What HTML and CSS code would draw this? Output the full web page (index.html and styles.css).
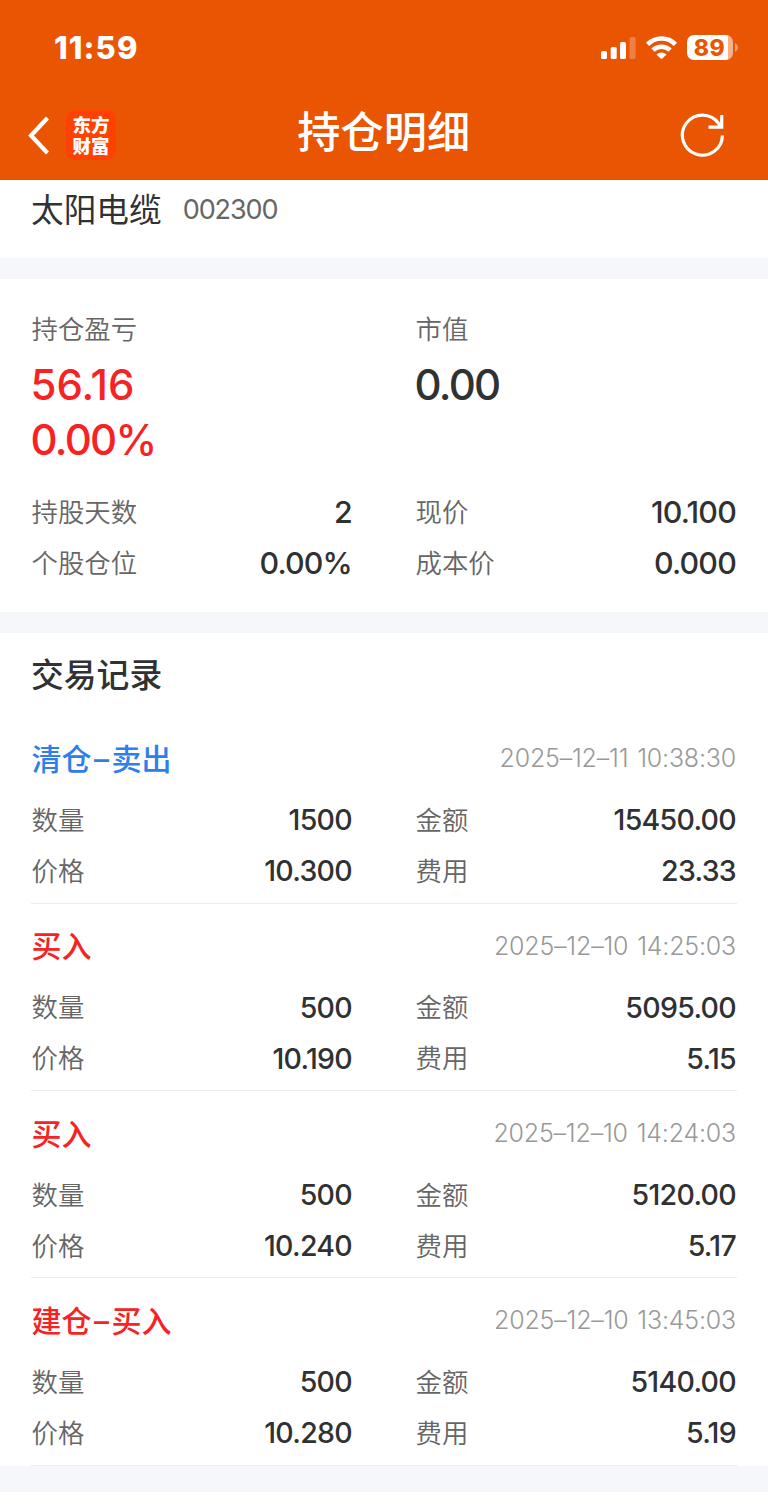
FILE: index.html
```html
<!DOCTYPE html>
<html lang="zh-CN">
<head>
    <meta charset="UTF-8">
    <meta name="viewport" content="width=device-width, initial-scale=1.0">
    <title>持仓明细</title>
    <link rel="stylesheet" href="styles.css">
</head>
<body>
    <header class="header">
        <div class="status-bar">
            <span class="clock">11:59</span>
            <div class="status-icons">
                <svg class="signal" width="36" height="24" viewBox="0 0 36 24" fill="#fff">
                    <rect x="1" y="15" width="6" height="8" rx="1.6"/>
                    <rect x="10.7" y="11" width="6" height="12" rx="1.6"/>
                    <rect x="20" y="6" width="6" height="17" rx="1.6"/>
                    <rect x="29.6" y="1" width="6" height="22" rx="1.6" opacity="0.25"/>
                </svg>
                <svg class="wifi" width="32" height="24" viewBox="0 0 32 24" fill="none" stroke="#fff" stroke-width="4.6">
                    <path d="M2.6 8.3 A19.5 19.5 0 0 1 30.4 8.3"/>
                    <path d="M7.9 14.2 A12.3 12.3 0 0 1 25.1 14.2"/>
                    <path d="M11.4 18.4 Q16.5 14.6 21.6 18.4 L16.5 23.2 Z" fill="#fff" stroke="none"/>
                </svg>
                <div class="battery"><span class="battery-level">89</span></div>
                <svg class="battery-tip" width="3" height="9" viewBox="0 0 3 9"><path d="M0 0 Q2.8 1.5 2.8 4.5 Q2.8 7.5 0 9 Z" fill="#fff" opacity="0.5"/></svg>
            </div>
        </div>
        <div class="nav">
            <div class="nav-left">
                <svg width="24" height="40" viewBox="0 0 24 40" fill="none" stroke="#fff" stroke-width="4.2">
                    <path d="M21.5 3 L5 20.5 L21.5 38"/>
                </svg>
                <div class="logo"><span>东方</span><span>财富</span></div>
            </div>
            <h1 class="title">持仓明细</h1>
            <svg class="refresh" width="46" height="46" viewBox="0 0 46 46" fill="none" stroke="#fff" stroke-width="3.2">
                <path d="M44.4 23.4 A20 20 0 1 1 40.8 11.7 L42.5 14.5"/>
                <path d="M43.7 3 V15.2 H30.5"/>
            </svg>
        </div>
    </header>

    <section class="stock">
        <span class="stock-name">太阳电缆</span>
        <span class="stock-code">002300</span>
    </section>

    <section class="summary">
        <div class="overview">
            <div>
                <div class="label">持仓盈亏</div>
                <div class="big profit red">56.16</div>
                <div class="big red">0.00%</div>
            </div>
            <div>
                <div class="label">市值</div>
                <div class="big">0.00</div>
            </div>
        </div>
        <div class="grid">
            <div class="cell"><span class="label">持股天数</span><span class="value">2</span></div>
            <div class="cell"><span class="label">现价</span><span class="value">10.100</span></div>
            <div class="cell"><span class="label">个股仓位</span><span class="value">0.00%</span></div>
            <div class="cell"><span class="label">成本价</span><span class="value">0.000</span></div>
        </div>
    </section>

    <section class="records">
        <h2 class="records-title">交易记录</h2>

        <div class="record">
            <div class="record-head"><span class="type blue">清仓<span class="dash">–</span>卖出</span><span class="time">2025–12–11 10:38:30</span></div>
            <div class="grid">
                <div class="cell"><span class="label">数量</span><span class="value">1500</span></div>
                <div class="cell"><span class="label">金额</span><span class="value">15450.00</span></div>
                <div class="cell"><span class="label">价格</span><span class="value">10.300</span></div>
                <div class="cell"><span class="label">费用</span><span class="value">23.33</span></div>
            </div>
        </div>

        <div class="record">
            <div class="record-head"><span class="type red">买入</span><span class="time">2025–12–10 14:25:03</span></div>
            <div class="grid">
                <div class="cell"><span class="label">数量</span><span class="value">500</span></div>
                <div class="cell"><span class="label">金额</span><span class="value">5095.00</span></div>
                <div class="cell"><span class="label">价格</span><span class="value">10.190</span></div>
                <div class="cell"><span class="label">费用</span><span class="value">5.15</span></div>
            </div>
        </div>

        <div class="record">
            <div class="record-head"><span class="type red">买入</span><span class="time">2025–12–10 14:24:03</span></div>
            <div class="grid">
                <div class="cell"><span class="label">数量</span><span class="value">500</span></div>
                <div class="cell"><span class="label">金额</span><span class="value">5120.00</span></div>
                <div class="cell"><span class="label">价格</span><span class="value">10.240</span></div>
                <div class="cell"><span class="label">费用</span><span class="value">5.17</span></div>
            </div>
        </div>

        <div class="record">
            <div class="record-head"><span class="type red">建仓<span class="dash">–</span>买入</span><span class="time">2025–12–10 13:45:03</span></div>
            <div class="grid">
                <div class="cell"><span class="label">数量</span><span class="value">500</span></div>
                <div class="cell"><span class="label">金额</span><span class="value">5140.00</span></div>
                <div class="cell"><span class="label">价格</span><span class="value">10.280</span></div>
                <div class="cell"><span class="label">费用</span><span class="value">5.19</span></div>
            </div>
        </div>
    </section>
    <div class="footer-gap"></div>
</body>
</html>
```
FILE: styles.css
```css
* {
    box-sizing: border-box;
}
body {
    margin: 0;
    font-family: Inter, "Noto Sans CJK SC", sans-serif;
    background: #fff;
    color: #303133;
}
.header {
    height: 180px;
    background: #ea5504;
    color: #fff;
}
.status-bar {
    display: flex;
    justify-content: space-between;
    align-items: center;
    height: 92px;
    padding: 3px 30px 0 54px;
}
.clock {
    font-size: 31px;
    font-weight: 800;
    letter-spacing: 1.1px;
}
.status-icons {
    display: flex;
    align-items: center;
}
.wifi {
    margin: 0 10px 0 9px;
}
.battery {
    width: 46px;
    height: 25px;
    border-radius: 7px;
    background: linear-gradient(to right, #fff 41px, #f6b18b 41px);
}
.battery-level {
    display: block;
    width: 45px;
    line-height: 26px;
    font-size: 23px;
    font-weight: 800;
    text-align: center;
    letter-spacing: 0.5px;
    color: #ea5504;
}
.battery-tip {
    margin-left: 2px;
}
.nav {
    display: grid;
    grid-template-columns: 1fr auto 1fr;
    align-items: center;
    height: 86px;
    padding: 0 44.5px 0 26px;
}
.nav-left {
    display: flex;
    align-items: center;
    gap: 16px;
}
.logo {
    display: flex;
    flex-direction: column;
    justify-content: center;
    align-items: center;
    width: 50px;
    height: 50px;
    padding-top: 2px;
    border-radius: 9px;
    background: #ff4203;
    font-size: 18.5px;
    font-weight: 900;
    line-height: 21px;
}
.title {
    margin: 0 0 6px 18px;
    font-size: 43.2px;
    font-weight: 500;
    line-height: 60px;
}
.refresh {
    justify-self: end;
}
.stock {
    display: flex;
    align-items: center;
    gap: 21px;
    height: 78px;
    padding: 0 31px 20px;
}
.stock-name {
    margin-top: -3px;
    font-size: 32.7px;
}
.stock-code {
    font-size: 27px;
    letter-spacing: -1.1px;
    color: #666;
}
.summary {
    height: 375px;
    padding: 29px 32px 0;
    border-top: 21px solid #f6f7fa;
    border-bottom: 21px solid #f6f7fa;
}
.overview,
.grid {
    display: grid;
    grid-template-columns: 1fr 1fr;
    column-gap: 64px;
}
.label {
    margin-left: -0.5px;
    font-size: 26.4px;
    font-weight: 350;
    line-height: 42px;
    color: #666;
}
.big {
    margin: 7px 0 0 -1.5px;
    font-size: 42px;
    font-weight: 550;
    line-height: 55px;
    letter-spacing: -1.7px;
}
.big + .big {
    margin-top: 0;
}
.profit {
    letter-spacing: 0;
}
.overview {
    margin-bottom: 19px;
}
.cell {
    display: flex;
    justify-content: space-between;
    align-items: center;
    height: 51px;
}
.value {
    font-size: 28.5px;
    font-weight: 500;
    letter-spacing: -0.7px;
}
.summary .value {
    font-size: 30.4px;
    letter-spacing: -0.8px;
}
.red {
    color: #f72224;
}
.blue {
    color: #2e80e8;
}
.records {
    padding: 0 31px;
}
.records-title {
    margin: 0;
    height: 83.3px;
    font-size: 32.8px;
    font-weight: 500;
    line-height: 84px;
}
.record {
    height: 187.4px;
    padding: 16px 1px 0;
    border-bottom: 1px solid #ececee;
}
.record-head {
    display: flex;
    justify-content: space-between;
    align-items: center;
    height: 52px;
    margin-bottom: 10px;
}
.type {
    margin: -3px 0 0 -0.5px;
    font-size: 30px;
    font-weight: 500;
}
.dash {
    margin: 0 2.5px;
}
.time {
    font-size: 25px;
    font-weight: 350;
    letter-spacing: -0.2px;
    word-spacing: 2px;
    color: #999;
}
.footer-gap {
    height: 26px;
    background: #f6f7fa;
}
```
